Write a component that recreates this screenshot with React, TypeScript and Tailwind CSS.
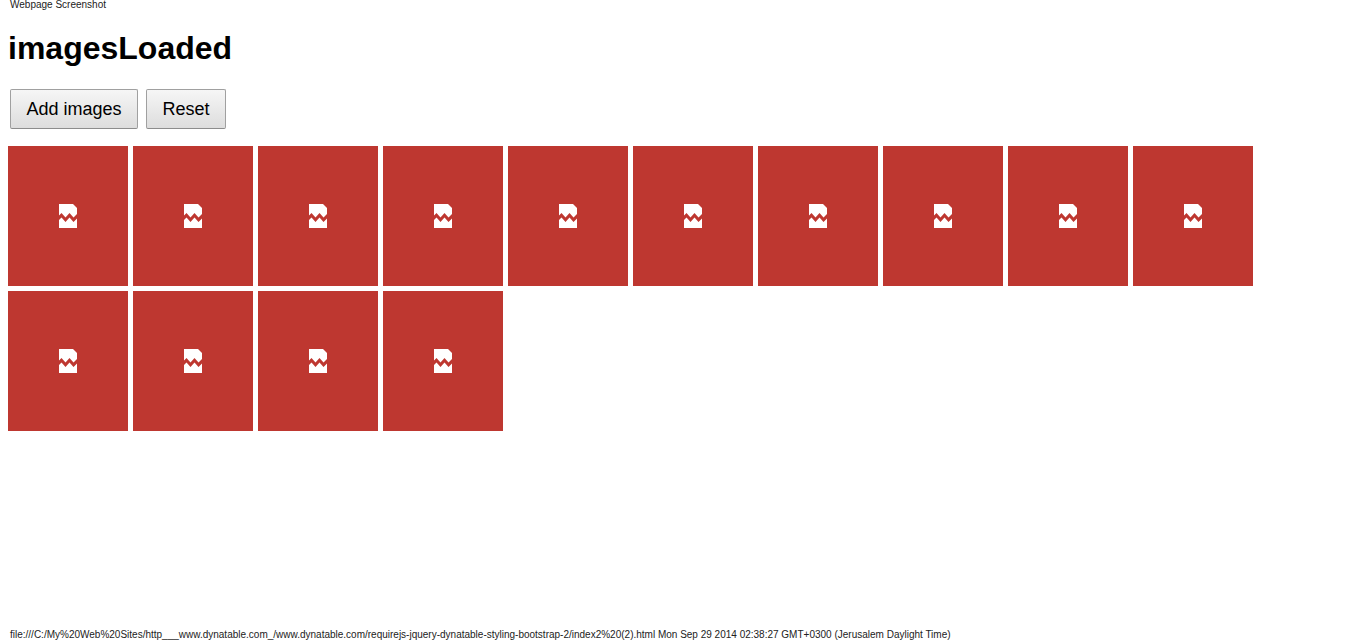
import { useState } from "react";

const INITIAL_COUNT = 14;
const BATCH_SIZE = 7;

function BrokenImage() {
  return (
    <li className="flex h-[140px] w-[120px] items-center justify-center bg-[#be3730]">
      <svg width="18" height="24" viewBox="0 0 18 24" fill="#fff" role="img" aria-label="Broken image">
        <path d="M0 0H14L18 4V10L14.5 13.5L10.5 9L6.5 13.5L2.5 9L0 11.5Z" />
        <path d="M0 16L2.5 13.5L6.5 18L10.5 13.5L14.5 18L18 14.5V24H0Z" />
      </svg>
    </li>
  );
}

function Button({ label, width, onClick }: { label: string; width: string; onClick: () => void }) {
  return (
    <button
      type="button"
      onClick={onClick}
      className={`${width} h-10 rounded-[2px] border border-[#a0a0a0] border-b-[#8c8c8c] bg-linear-to-b from-[#f6f6f6] to-[#dddddd] text-lg leading-6 whitespace-nowrap text-black`}
    >
      {label}
    </button>
  );
}

export default function App() {
  const [count, setCount] = useState(INITIAL_COUNT);

  return (
    <div className="flex min-h-screen flex-col bg-white font-['Liberation_Sans',Arial,sans-serif] text-black">
      <header className="px-[10px] text-[10px] leading-[10px] text-[#222]">Webpage Screenshot</header>
      <main className="grow px-2 pt-5">
        <h1 className="text-[32px] leading-9 font-bold">imagesLoaded</h1>
        <div className="mt-[23px] flex gap-2 px-[2px]">
          <Button label="Add images" width="w-32" onClick={() => setCount(count + BATCH_SIZE)} />
          <Button label="Reset" width="w-20" onClick={() => setCount(0)} />
        </div>
        <ul className="mt-[17px] flex flex-wrap gap-[5px]">
          {Array.from({ length: count }, (_, i) => (
            <BrokenImage key={i} />
          ))}
        </ul>
      </main>
      <footer className="px-[10px] text-[10px] leading-[10px] text-[#222]">
        file:///C:/My%20Web%20Sites/http___www.dynatable.com_/www.dynatable.com/requirejs-jquery-dynatable-styling-bootstrap-2/index2%20(2).html
        Mon Sep 29 2014 02:38:27 GMT+0300 (Jerusalem Daylight Time)
      </footer>
    </div>
  );
}
